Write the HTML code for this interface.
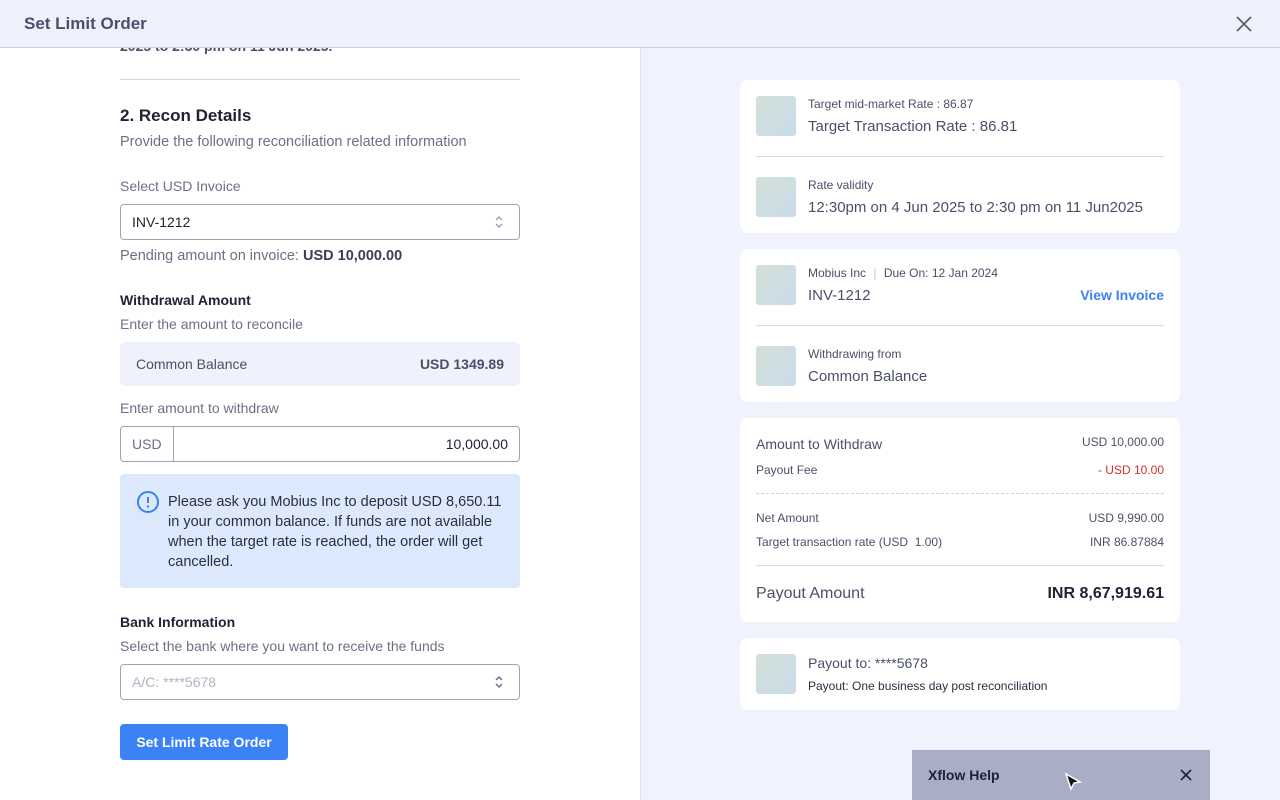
<!DOCTYPE html>
<html><head><meta charset="utf-8"><style>
*{box-sizing:border-box;margin:0;padding:0}
body{width:1280px;height:800px;overflow:hidden;font-family:"Liberation Sans",sans-serif;background:#f0f3fd;position:relative;color:#4a5068}
.a{position:absolute;white-space:nowrap}
.hdr{position:absolute;left:0;top:0;width:1280px;height:48px;background:#eef1fc;border-bottom:1px solid #cdd1de}
.left{position:absolute;left:0;top:48px;width:641px;height:752px;background:#fff;border-right:1px solid #dde0ea}
.card{position:absolute;left:740px;width:440px;background:#fff;border-radius:8px}
.ic{position:absolute;width:40px;height:40px;border-radius:3px;background:linear-gradient(135deg,#d3e0d6,#c9dcec)}
.box{position:absolute;border:1px solid #9ea3b5;border-radius:4px;background:#fff}
.g{color:#6b7084}
</style></head><body>
<div class="hdr"></div>
<div class="a" style="left:24px;top:14px;font-size:17px;font-weight:bold;color:#4a5068">Set Limit Order</div>
<svg class="a" style="left:1236px;top:16px" width="16" height="16" viewBox="0 0 16 16"><path d="M1 1L15 15M15 1L1 15" stroke="#5b6070" stroke-width="1.8"/></svg>

<div class="left"></div>
<div class="a" style="left:120px;top:38px;font-size:14px;color:#4a5068;font-weight:bold;clip-path:inset(10px 0 0 0)">2025 to 2:30 pm on 11 Jun 2025.</div>
<div class="a" style="left:120px;top:79px;width:400px;height:1px;background:#d5d8e0"></div>
<div class="a" style="left:120px;top:106px;font-size:17px;font-weight:bold;color:#1e2233">2. Recon Details</div>
<div class="a g" style="left:120px;top:134px;font-size:14.5px">Provide the following reconciliation related information</div>
<div class="a g" style="left:120px;top:178px;font-size:14px">Select USD Invoice</div>
<div class="box" style="left:120px;top:204px;width:400px;height:36px"></div>
<div class="a" style="left:132px;top:214px;font-size:14px;color:#1e2233">INV-1212</div>
<svg class="a" style="left:494px;top:214px" width="10" height="16" viewBox="0 0 10 16"><path d="M2 6L5 3L8 6M2 10L5 13L8 10" stroke="#9ea3b5" stroke-width="1.5" fill="none"/></svg>
<div class="a g" style="left:120px;top:248px;font-size:14.5px">Pending amount on invoice: <b style="color:#3a3f52">USD 10,000.00</b></div>
<div class="a" style="left:120px;top:292px;font-size:14px;font-weight:bold;color:#1e2233">Withdrawal Amount</div>
<div class="a g" style="left:120px;top:316px;font-size:14px">Enter the amount to reconcile</div>
<div class="a" style="left:120px;top:342px;width:400px;height:44px;background:#eff1fc;border-radius:6px"></div>
<div class="a" style="left:136px;top:356px;font-size:14px;color:#4a5068">Common Balance</div>
<div class="a" style="left:380px;width:124px;text-align:right;top:356px;font-size:14px;font-weight:bold;color:#4a5068">USD 1349.89</div>
<div class="a g" style="left:120px;top:400px;font-size:14px">Enter amount to withdraw</div>
<div class="box" style="left:120px;top:426px;width:400px;height:36px"></div>
<div class="a" style="left:173px;top:427px;width:1px;height:34px;background:#9ea3b5"></div>
<div class="a g" style="left:132px;top:436px;font-size:14px">USD</div>
<div class="a" style="left:400px;top:436px;width:108px;text-align:right;font-size:14px;color:#1e2233">10,000.00</div>
<div class="a" style="left:120px;top:474px;width:400px;height:114px;background:#dce9fd;border-radius:4px"></div>
<svg class="a" style="left:136px;top:490px" width="24" height="24" viewBox="0 0 24 24"><circle cx="12" cy="12" r="10" stroke="#3b82f6" stroke-width="2" fill="none"/><path d="M12 7v6" stroke="#3b82f6" stroke-width="2"/><circle cx="12" cy="16.5" r="1.2" fill="#3b82f6"/></svg>
<div class="a" style="left:168px;top:492px;font-size:14.5px;line-height:20px;color:#2a2f40;white-space:normal;width:340px">Please ask you Mobius Inc to deposit USD 8,650.11 in your common balance. If funds are not available when the target rate is reached, the order will get cancelled.</div>
<div class="a" style="left:120px;top:614px;font-size:14px;font-weight:bold;color:#1e2233">Bank Information</div>
<div class="a g" style="left:120px;top:638px;font-size:14px">Select the bank where you want to receive the funds</div>
<div class="box" style="left:120px;top:664px;width:400px;height:36px"></div>
<div class="a" style="left:132px;top:674px;font-size:14px;color:#b0b4c2">A/C: ****5678</div>
<svg class="a" style="left:494px;top:674px" width="10" height="16" viewBox="0 0 10 16"><path d="M2 6L5 3L8 6M2 10L5 13L8 10" stroke="#6b7084" stroke-width="1.5" fill="none"/></svg>
<div class="a" style="left:120px;top:724px;width:168px;height:36px;background:#3b82f6;border-radius:4px;color:#fff;font-size:14px;font-weight:bold;text-align:center;line-height:36px">Set Limit Rate Order</div>

<div class="card" style="top:80px;height:153px"></div>
<div class="ic" style="left:756px;top:96px"></div>
<div class="a" style="left:808px;top:97px;font-size:12px">Target mid-market Rate : 86.87</div>
<div class="a" style="left:808px;top:118px;font-size:15px">Target Transaction Rate : 86.81</div>
<div class="a" style="left:756px;top:156px;width:408px;height:1px;background:#d5d9e8"></div>
<div class="ic" style="left:756px;top:177px"></div>
<div class="a" style="left:808px;top:178px;font-size:12px">Rate validity</div>
<div class="a" style="left:808px;top:199px;font-size:15px">12:30pm on 4 Jun 2025 to 2:30 pm on 11 Jun2025</div>

<div class="card" style="top:249px;height:153px"></div>
<div class="ic" style="left:756px;top:265px"></div>
<div class="a" style="left:808px;top:266px;font-size:12px">Mobius Inc <span style="color:#c0c3cf;margin:0 4px">|</span> Due On: 12 Jan 2024</div>
<div class="a" style="left:808px;top:287px;font-size:15px">INV-1212</div>
<div class="a" style="left:1040px;width:124px;text-align:right;top:287px;font-size:14px;font-weight:bold;color:#3b82f6">View Invoice</div>
<div class="a" style="left:756px;top:325px;width:408px;height:1px;background:#d5d9e8"></div>
<div class="ic" style="left:756px;top:346px"></div>
<div class="a" style="left:808px;top:347px;font-size:12px">Withdrawing from</div>
<div class="a" style="left:808px;top:368px;font-size:15px">Common Balance</div>

<div class="card" style="top:418px;height:204px"></div>
<div class="a" style="left:756px;top:436px;font-size:14px">Amount to Withdraw</div>
<div class="a" style="left:1000px;width:164px;text-align:right;top:435px;font-size:12px">USD 10,000.00</div>
<div class="a" style="left:756px;top:463px;font-size:12px">Payout Fee</div>
<div class="a" style="left:1000px;width:164px;text-align:right;top:463px;font-size:12px;color:#d32f2f">- USD 10.00</div>
<div class="a" style="left:756px;top:493px;width:408px;border-top:1px dashed #cfd2dc"></div>
<div class="a" style="left:756px;top:511px;font-size:12px">Net Amount</div>
<div class="a" style="left:1000px;width:164px;text-align:right;top:511px;font-size:12px">USD 9,990.00</div>
<div class="a" style="left:756px;top:535px;font-size:12px">Target transaction rate (USD&nbsp; 1.00)</div>
<div class="a" style="left:1000px;width:164px;text-align:right;top:535px;font-size:12px">INR 86.87884</div>
<div class="a" style="left:756px;top:565px;width:408px;height:1px;background:#d5d9e8"></div>
<div class="a" style="left:756px;top:585px;font-size:16px">Payout Amount</div>
<div class="a" style="left:964px;width:200px;text-align:right;top:585px;font-size:16px;font-weight:bold;color:#1e2233">INR 8,67,919.61</div>

<div class="card" style="top:638px;height:72px"></div>
<div class="ic" style="left:756px;top:654px"></div>
<div class="a" style="left:808px;top:655px;font-size:14px">Payout to: ****5678</div>
<div class="a" style="left:808px;top:679px;font-size:12px;color:#2a2f40">Payout: One business day post reconciliation</div>

<div class="a" style="left:912px;top:750px;width:298px;height:50px;background:#a9aec6"></div>
<div class="a" style="left:928px;top:767px;font-size:14px;font-weight:bold;color:#1e2233">Xflow Help</div>
<svg class="a" style="left:1063px;top:772px" width="20" height="22" viewBox="0 0 20 22"><path d="M3 2L17 10L11 11L8 17Z" fill="#111" stroke="#fff" stroke-width="1.5"/></svg>
<svg class="a" style="left:1180px;top:769px" width="12" height="12" viewBox="0 0 12 12"><path d="M1 1L11 11M11 1L1 11" stroke="#1e2233" stroke-width="1.6"/></svg>
</body></html>
